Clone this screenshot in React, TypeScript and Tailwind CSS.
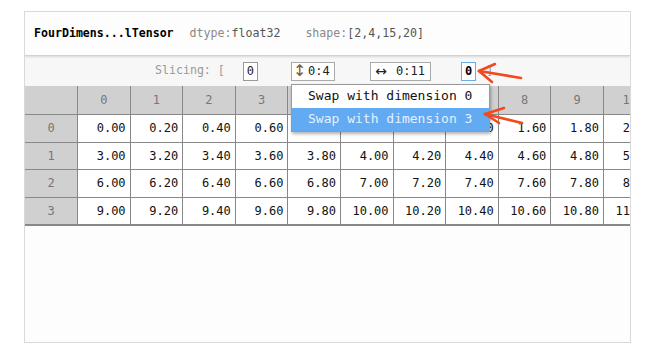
const cols = Array.from({ length: 11 }, (_, j) => j);
const rows = [0, 1, 2, 3];

function Box({ children, className = '' }: { children: React.ReactNode; className?: string }) {
  return (
    <div className={`h-[19px] flex items-center border bg-white text-[12px] text-[#222] ${className}`}>
      {children}
    </div>
  );
}

export default function App() {
  return (
    <div className="min-h-screen bg-white pt-[11px] pl-[24px]">
      <div className="relative w-[607px] h-[332px] border border-[#d9d9d9] bg-[#fdfdfd] overflow-hidden font-['DejaVu_Sans_Mono',monospace]">
        {/* title bar */}
        <div className="h-[44px] flex items-center pl-[9px] text-[11.6px] border-b border-[#d2d2d2] shadow-[0_1px_2px_rgba(0,0,0,0.12)] bg-[#fdfdfd] relative z-10">
          <span className="font-bold text-black">FourDimens...lTensor</span>
          <span className="ml-[16px] text-[#888]">
            dtype:<span className="text-[#555]">float32</span>
          </span>
          <span className="ml-[25px] text-[#888]">
            shape:<span className="text-[#555]">[2,4,15,20]</span>
          </span>
        </div>

        {/* slicing row */}
        <div className="h-[30px] flex items-center pl-[130px] bg-[#f7f7f7] text-[11.6px]">
          <span className="text-[#999]">Slicing: [</span>
          <Box className="ml-[18px] px-[3px] border-[#999]">0</Box>
          <div className="relative ml-[33px]">
            <Box className="w-[44px] pl-[1px] border-[#aaa]">
              <span className="w-[10px] text-center font-['DejaVu_Sans',sans-serif] text-[16px] leading-none text-[#8a5a28]">↕</span>
              <span className="ml-[5px]">0:4</span>
            </Box>
            <div className="absolute left-0 top-[22px] w-[199px] z-20 bg-white border border-[#9a9a9a] shadow-[1px_2px_3px_rgba(0,0,0,0.3)] text-[13px]">
              <div className="h-[23px] flex items-center pl-[16px] text-[#111]">Swap with dimension 0</div>
              <div className="h-[23px] flex items-center pl-[16px] bg-[#62abf3] text-[#e4f1ff]">Swap with dimension 3</div>
            </div>
          </div>
          <Box className="ml-[35px] w-[61px] pl-[2px] border-[#aaa]">
            <span className="w-[16px] text-center font-['DejaVu_Sans',sans-serif] text-[14px] leading-none">↔</span>
            <span className="ml-[7px]">0:11</span>
          </Box>
          <Box className="ml-[30px] px-[3px] border-[#6aaee8] font-bold text-black">0</Box>
          <span className="ml-[10px] text-[#999]">]</span>
        </div>

        {/* table */}
        <div className="grid grid-cols-[53px_repeat(11,52.6px)] text-[12px] border-b border-[#888] w-max">
          <div className="h-[29px] bg-[#d0d0d0] border-r border-b border-[#888]" />
          {cols.map((j) => (
            <div
              key={j}
              className="h-[29px] bg-[#d0d0d0] border-r border-b border-[#888] flex items-center justify-center text-[#777]"
            >
              {j}
            </div>
          ))}
          {rows.map((i) => (
            <div key={i} className="contents">
              <div className="h-[27.5px] bg-[#d0d0d0] border-r border-b border-[#888] flex items-center justify-center text-[#777]">
                {i}
              </div>
              {cols.map((j) => (
                <div
                  key={j}
                  className="h-[27.5px] bg-white border-r border-b border-[#888] flex items-center justify-end pr-[4px] text-[#111]"
                >
                  {(i * 3 + j * 0.2).toFixed(2)}
                </div>
              ))}
            </div>
          ))}
        </div>

        {/* annotation arrows */}
        <svg className="absolute left-0 top-0 z-30 pointer-events-none" width="607" height="332">
          <g stroke="#f2491f" strokeWidth="2.6" strokeLinecap="round" fill="none">
            <path d="M454 59 L496 66" />
            <path d="M454 59 L470 52" />
            <path d="M454 59 L467 70" />
            <path d="M460 102 L497 111" />
            <path d="M460 102 L479 96" />
            <path d="M460 102 L474 111" />
          </g>
        </svg>
      </div>
    </div>
  );
}
